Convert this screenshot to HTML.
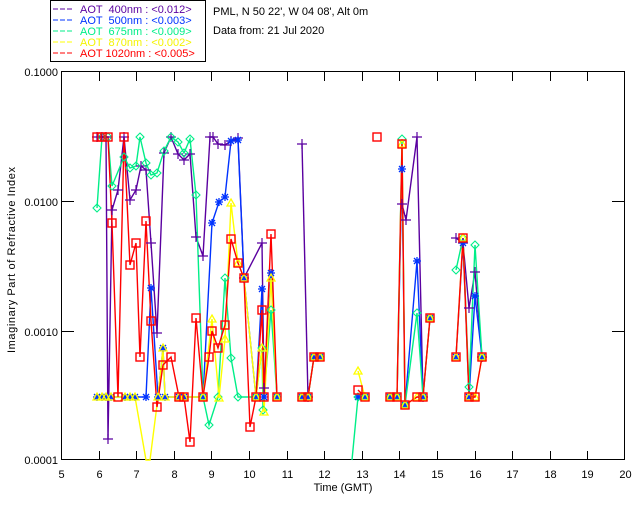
<!DOCTYPE html>
<html><head><meta charset="utf-8"><style>
html,body{margin:0;padding:0;background:#fff;width:640px;height:512px;overflow:hidden}
svg text{font-family:"Liberation Sans",sans-serif;font-size:11px}
</style></head><body>
<svg id="s" width="640" height="512" xmlns="http://www.w3.org/2000/svg">
<rect x="50.5" y="0.5" width="155" height="61" fill="none" stroke="#000"/>
<g font-size="11">
<line x1="53" y1="9" x2="74" y2="9" stroke="#5a00a0" stroke-dasharray="5,2"/><text x="80" y="13" fill="#5a00a0">AOT &#160;400nm : &lt;0.012&gt;</text>
<line x1="53" y1="20" x2="74" y2="20" stroke="#0033ff" stroke-dasharray="5,2"/><text x="80" y="24" fill="#0033ff">AOT &#160;500nm : &lt;0.003&gt;</text>
<line x1="53" y1="31" x2="74" y2="31" stroke="#00ee88" stroke-dasharray="5,2"/><text x="80" y="35" fill="#00ee88">AOT &#160;675nm : &lt;0.009&gt;</text>
<line x1="53" y1="42" x2="74" y2="42" stroke="#ffff00" stroke-dasharray="5,2"/><text x="80" y="46" fill="#f4f400">AOT &#160;870nm : &lt;0.002&gt;</text>
<line x1="53" y1="53" x2="74" y2="53" stroke="#ff0000" stroke-dasharray="5,2"/><text x="80" y="57" fill="#ff0000">AOT 1020nm : &lt;0.005&gt;</text>
</g>
<text x="213" y="15">PML, N 50 22', W 04 08', Alt 0m</text>
<text x="213" y="34">Data from: 21 Jul 2020</text>
<rect x="61.5" y="71.5" width="563" height="388" fill="none" stroke="#000"/>
<g text-anchor="end">
<text x="58" y="76">0.1000</text><text x="58" y="206">0.0100</text>
<text x="58" y="336">0.0010</text><text x="58" y="464">0.0001</text>
</g>
<text x="15" y="260" text-anchor="middle" font-size="10.5" textLength="186" transform="rotate(-90 15 260)">Imaginary Part of Refractive Index</text>
<text x="343" y="491" text-anchor="middle">Time (GMT)</text>
<g id="ax"></g>
<g id="data" fill="none" stroke-width="1.4"></g>
</svg>
<script>
var NS="http://www.w3.org/2000/svg",ax=document.getElementById("ax"),d=document.getElementById("data");
function el(p,t,a){var e=document.createElementNS(NS,t);for(var k in a)e.setAttribute(k,a[k]);p.appendChild(e);return e;}
for(var h=5;h<=20;h++){var x=Math.round(61+(h-5)*37.6)+0.5;
 if(h>5&&h<20){el(ax,"line",{x1:x,y1:460,x2:x,y2:451,stroke:"#000"});el(ax,"line",{x1:x,y1:72,x2:x,y2:81,stroke:"#000"});}
 var t=el(ax,"text",{x:x,y:478,"text-anchor":"middle"});t.textContent=h;}
[201,331].forEach(function(y){el(ax,"line",{x1:62,y1:y+.5,x2:74,y2:y+.5,stroke:"#000"});el(ax,"line",{x1:612,y1:y+.5,x2:624,y2:y+.5,stroke:"#000"});});
function P(s){return s.trim().split(/\s+/).map(function(p){return p.split(",").map(Number);});}
function line(pts,c){el(d,"polyline",{points:pts.map(function(p){return p.join(",")}).join(" "),stroke:c});}
var PU="#5a00a0",BL="#0033ff",GR="#00ee88",YE="#ffff00",RD="#ff0000";
var purple=[P("97,137 102,137 106,137 108,439 112,210 118,190 124,137 130,200 136,190 141,166 146,170 151,243 157,333 164,153 171,137 178,154 184,160 190,154 196,237 203,256 210,137 213,137 218,144 225,145 231,141 238,138 244,278 262,243 264,388"),P("302,144 308,397"),P("402,204 406,220 417,137 423,397"),P("456,238 463,243 469,308 475,272 482,357")];
var blue=[P("97,397 102,397 106,397 111,397 125,397 130,397 135,397 146,397 151,288 158,397 163,348 165,397 179,397 184,397 203,397 212,223 219,202 225,197 231,141 238,140 244,278 256,397 262,289 264,397 271,273 277,397"),P("302,397 308,397 314,357 320,357"),P("358,397 365,397"),P("390,397 397,397 402,169 405,405 417,261 423,397 430,318"),P("456,357 463,243 469,397 475,296 482,357")];
var green=[P("97,208 102,137 108,137 112,186 124,157 130,168 136,166 140,137 146,163 151,175 157,173 164,151 171,137 178,142 184,153 190,139 196,195 203,397 209,425 218,397 225,278 231,358 238,397 256,397 262,348 263,410 271,310 277,397"),P("302,397 308,397 314,357 320,357"),P("352,460 358,397 365,397"),P("390,397 397,397 402,139 405,405 417,313 423,397 430,318"),P("456,270 463,238 469,387 475,245 482,357")];
var yellow=[P("97,397 102,397 106,397 111,397 125,397 130,397 135,397 146,460 150,460 158,397 163,348 165,397 179,397 184,397 203,397 212,319 219,398 225,339 231,203 238,263 244,278 256,397 262,348 264,412 271,278 277,397"),P("302,397 308,397 314,357 320,357"),P("358,371 365,397"),P("390,397 397,397 402,144 405,405 417,397 423,397 430,318"),P("456,357 463,238 469,397 475,397 482,357")];
var red=[P("97,137 102,137 108,137 112,223 118,397 124,137 130,265 136,243 140,357 146,221 151,321 157,407 163,365 171,357 179,397 184,397 190,442 196,318 203,397 209,357 212,331 218,348 225,325 231,239 238,263 244,278 250,427 256,397 262,310 264,397 271,234 277,397"),P("302,397 308,397 314,357 320,357"),P("358,390 365,397"),P("377,137"),P("390,397 397,397 402,144 405,405 417,397 423,397 430,318"),P("456,357 463,238 469,397 475,397 482,357")];
[[purple,PU],[blue,BL],[green,GR],[yellow,YE],[red,RD]].forEach(function(s){s[0].forEach(function(l){if(l.length>1)line(l,s[1]);});});
function plus(x,y){el(d,"path",{d:"M"+(x-5)+","+y+"h10M"+x+","+(y-5)+"v10",stroke:PU,"stroke-width":1.2});}
function star(x,y){el(d,"path",{d:"M"+(x-4)+","+y+"h8M"+x+","+(y-4)+"v8M"+(x-3)+","+(y-3)+"l6,6M"+(x-3)+","+(y+3)+"l6,-6",stroke:BL,"stroke-width":1.3});}
function dia(x,y){el(d,"path",{d:"M"+x+","+(y-4)+"l4,4l-4,4l-4,-4z",stroke:GR,"stroke-width":1.1});}
function tri(x,y){el(d,"path",{d:"M"+x+","+(y-4)+"l4,7h-8z",stroke:YE,"stroke-width":1.3});}
function sq(x,y){el(d,"rect",{x:x-4,y:y-4,width:8,height:8,stroke:RD,"stroke-width":1.4});}
purple.forEach(function(l){l.forEach(function(p){if(p[1]<440)plus(p[0],p[1]);});});
blue.forEach(function(l){l.forEach(function(p){star(p[0],p[1]);});});
green.forEach(function(l){l.forEach(function(p){if(p[1]<455)dia(p[0],p[1]);});});
yellow.forEach(function(l){l.forEach(function(p){if(p[1]<455)tri(p[0],p[1]);});});
red.forEach(function(l){l.forEach(function(p){sq(p[0],p[1]);});});
</script>
</body></html>
